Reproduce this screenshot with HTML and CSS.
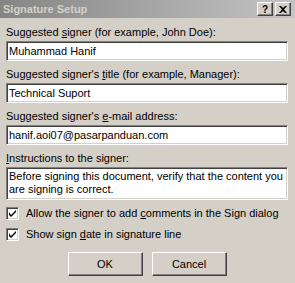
FILE: index.html
```html
<!DOCTYPE html>
<html lang="en">
<head>
    <meta charset="UTF-8">
    <title>Signature Setup</title>
    <link rel="stylesheet" href="styles.css">
</head>
<body>
    <div class="dialog">
        <div class="titlebar">
            <span class="title">Signature Setup</span>
            <div class="caption-buttons">
                <span class="cap-btn">?</span>
                <span class="cap-btn close">
                    <svg width="8" height="7" viewBox="0 0 8 7"><path d="M0 0h2l2 2 2-2h2L5 3.5 8 7H6L4 5 2 7H0l3-3.5z" fill="#000"/></svg>
                </span>
            </div>
        </div>
        <div class="content">
            <div class="label">Suggested <u>s</u>igner (for example, John Doe):</div>
            <div class="edit">Muhammad Hanif</div>

            <div class="label">Suggested signer's <u>t</u>itle (for example, Manager):</div>
            <div class="edit">Technical Suport</div>

            <div class="label">Suggested signer's <u>e</u>-mail address:</div>
            <div class="edit">hanif.aoi07@pasarpanduan.com</div>

            <div class="label"><u>I</u>nstructions to the signer:</div>
            <div class="edit multi">Before signing this document, verify that the content you<br>are signing is correct.</div>

            <div class="check first">
                <span class="box"><svg width="7" height="7" viewBox="0 0 7 7"><path d="M0 2v3l2 2 5-5V-0L2 5z" fill="#000"/></svg></span>
                <span>Allow the signer to add <u>c</u>omments in the Sign dialog</span>
            </div>
            <div class="check">
                <span class="box"><svg width="7" height="7" viewBox="0 0 7 7"><path d="M0 2v3l2 2 5-5V-0L2 5z" fill="#000"/></svg></span>
                <span>Show sign <u>d</u>ate in signature line</span>
            </div>

            <div class="buttons">
                <button class="btn">OK</button>
                <button class="btn">Cancel</button>
            </div>
        </div>
    </div>
</body>
</html>
```

FILE: styles.css
```css
body {
    margin: 0;
    background-color: #d4d0c8;
    font-family: "Liberation Sans", Arial, sans-serif;
    font-size: 11px;
    color: #000;
}

.dialog {
    width: 295px;
    height: 283px;
    overflow: hidden;
}

.titlebar {
    height: 18px;
    display: flex;
    justify-content: space-between;
    align-items: center;
    background: linear-gradient(to right, #858585, #c4c4c4);
    padding: 0 4px 0 3px;
}

.title {
    color: #d4d0c8;
    font-weight: bold;
    font-size: 11px;
}

.caption-buttons {
    display: flex;
    gap: 2px;
}

.cap-btn {
    width: 14px;
    height: 12px;
    background-color: #d4d0c8;
    border-top: 1px solid #fff;
    border-left: 1px solid #fff;
    border-right: 1px solid #404040;
    border-bottom: 1px solid #404040;
    box-shadow: inset -1px -1px #808080;
    display: flex;
    justify-content: center;
    align-items: center;
    font-weight: bold;
    font-size: 10px;
}

.content {
    padding: 8px 7px 0 6px;
}

.label {
    height: 13px;
    line-height: 13px;
    margin-bottom: 2px;
}

.edit {
    height: 16px;
    line-height: 16px;
    padding: 1px 2px;
    background-color: #fff;
    border-top: 1px solid #808080;
    border-left: 1px solid #808080;
    border-right: 1px solid #fff;
    border-bottom: 1px solid #fff;
    box-shadow: inset 1px 1px #404040, inset -1px -1px #d4d0c8;
    margin-bottom: 7px;
    white-space: nowrap;
}

.edit.multi {
    height: 28px;
    line-height: 13px;
    padding-top: 2px;
    margin-bottom: 7px;
}

.check {
    display: flex;
    align-items: center;
    gap: 7px;
    height: 13px;
    line-height: 13px;
    margin-bottom: 8px;
}

.box {
    width: 9px;
    height: 9px;
    background-color: #fff;
    border-top: 1px solid #808080;
    border-left: 1px solid #808080;
    border-right: 1px solid #fff;
    border-bottom: 1px solid #fff;
    box-shadow: inset 1px 1px #404040, inset -1px -1px #d4d0c8;
    padding: 1px;
    display: flex;
    justify-content: center;
    align-items: center;
}

.buttons {
    display: flex;
    justify-content: center;
    gap: 9px;
    margin-top: 11px;
}

.btn {
    width: 75px;
    height: 24px;
    margin: 0;
    padding: 0;
    font-family: "Liberation Sans", Arial, sans-serif;
    font-size: 11px;
    color: #000;
    background-color: #d4d0c8;
    border-top: 1px solid #fff;
    border-left: 1px solid #fff;
    border-right: 1px solid #404040;
    border-bottom: 1px solid #404040;
    box-shadow: inset -1px -1px #808080;
}
```
